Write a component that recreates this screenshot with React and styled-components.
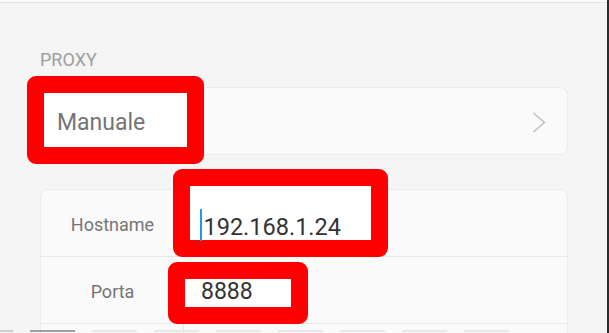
import React from 'react'
import styled, { createGlobalStyle } from 'styled-components'

const Global = createGlobalStyle`
  html, body {
    margin: 0;
    padding: 0;
    background: #f5f5f5;
    overflow: hidden;
  }
  body {
    font-family: Roboto, "Noto Sans", "Liberation Sans", sans-serif;
  }
`

const Screen = styled.div`
  position: relative;
  width: 607px;
  height: 333px;
  overflow: hidden;
  background: #f5f5f5;
  border-right: 2px solid #2b2b2b;
`

const TopStrip = styled.div`
  height: 2px;
  background: #fafafa;
  border-bottom: 1px solid #e4e4e4;
`

const Content = styled.div`
  padding: 47px 39px 0 40px;
`

const SectionLabel = styled.div`
  font-size: 18px;
  line-height: 20px;
  color: #9e9e9e;
  margin-bottom: 17px;
`

const Card = styled.div`
  position: relative;
  z-index: 0;
  background: #fafafa;
  border: 1px solid #ebebeb;
  border-radius: 8px;
  margin-bottom: ${p => p.$gap || 0}px;
`

const SelectRow = styled.div`
  display: flex;
  align-items: center;
  justify-content: space-between;
  height: 64px;
  padding: 2px 21px 0 16px;
`

const Frame = styled.span`
  position: relative;
  z-index: 1;
  display: inline-block;
  font-size: ${p => p.$size}px;
  line-height: ${p => p.$lh}px;
  color: ${p => p.$color};
  white-space: nowrap;

  &::before {
    content: '';
    position: absolute;
    z-index: -1;
    left: ${p => p.$box[0]}px;
    top: ${p => p.$box[1]}px;
    width: ${p => p.$box[2]}px;
    height: ${p => p.$box[3]}px;
    box-sizing: border-box;
    border: 17px solid #ff0000;
    border-radius: 9px;
    background: #ffffff;
  }
`

const FieldRow = styled.div`
  display: flex;
  height: ${p => p.$h}px;
  padding-top: ${p => p.$pt || 0}px;
  box-sizing: border-box;
  border-bottom: ${p => (p.$last ? 'none' : '1px solid #e6e6e6')};
`

const FieldLabel = styled.div`
  width: ${p => (p.$split ? 142 : 143)}px;
  display: flex;
  align-items: center;
  justify-content: center;
  font-size: 18px;
  line-height: 22px;
  color: #757575;
  border-right: ${p => (p.$split ? '1px solid #e6e6e6' : 'none')};
`

const FieldValue = styled.div`
  flex: 1;
  display: flex;
  align-items: center;
  padding-left: 17px;
`

const Caret = styled.span`
  display: inline-block;
  width: 2px;
  height: 32px;
  margin: 0 1.5px 0 -1px;
  vertical-align: -6px;
  background: #2196f3;
`

const Dock = styled.div`
  position: absolute;
  left: 0;
  right: 0;
  bottom: 0;
  height: 4px;
  display: flex;
  align-items: center;
  gap: 17px;
`

const DockItem = styled.div`
  width: ${p => p.$w}px;
  height: 2px;
  background: ${p => p.$c};
`

const Chevron = () => (
  <svg width="14" height="21" viewBox="0 0 14 21">
    <polyline points="1.5,1 12.5,10.5 1.5,20" fill="none" stroke="#bdbdbd" strokeWidth="1.4" />
  </svg>
)

const dock = [
  { w: 13, c: '#cfcfcf' },
  { w: 45, c: '#9aa0a7' },
  { w: 45, c: '#e6e8eb' },
  { w: 45, c: '#e6e8eb' },
  { w: 45, c: '#e6e8eb' },
  { w: 45, c: '#e2e7ee' },
  { w: 45, c: '#e2e7ee' },
  { w: 45, c: '#e6e8eb' },
  { w: 45, c: '#e6e8eb' },
]

const App = () => {
  return (
    <Screen>
      <Global />
      <TopStrip />
      <Content>
        <SectionLabel>PROXY</SectionLabel>
        <Card $gap={34}>
          <SelectRow>
            <Frame $size={23} $lh={27} $color="#757575" $box={[-30, -33, 177, 88]}>
              Manuale
            </Frame>
            <Chevron />
          </SelectRow>
        </Card>
        <Card>
          <FieldRow $h={67} $pt={3}>
            <FieldLabel>Hostname</FieldLabel>
            <FieldValue>
              <Frame $size={23.5} $lh={28} $color="#333333" $box={[-28, -40, 215, 88]}>
                <Caret />192.168.1.24
              </Frame>
            </FieldValue>
          </FieldRow>
          <FieldRow $h={67} $pt={3}>
            <FieldLabel>Porta</FieldLabel>
            <FieldValue>
              <Frame $size={23} $lh={27} $color="#333333" $box={[-33, -16, 140, 62]}>
                8888
              </Frame>
            </FieldValue>
          </FieldRow>
          <FieldRow $h={40} $last>
            <FieldLabel $split />
            <FieldValue />
          </FieldRow>
        </Card>
      </Content>
      <Dock>
        {dock.map((d, i) => (
          <DockItem key={i} $w={d.w} $c={d.c} />
        ))}
      </Dock>
    </Screen>
  )
}

export default App
